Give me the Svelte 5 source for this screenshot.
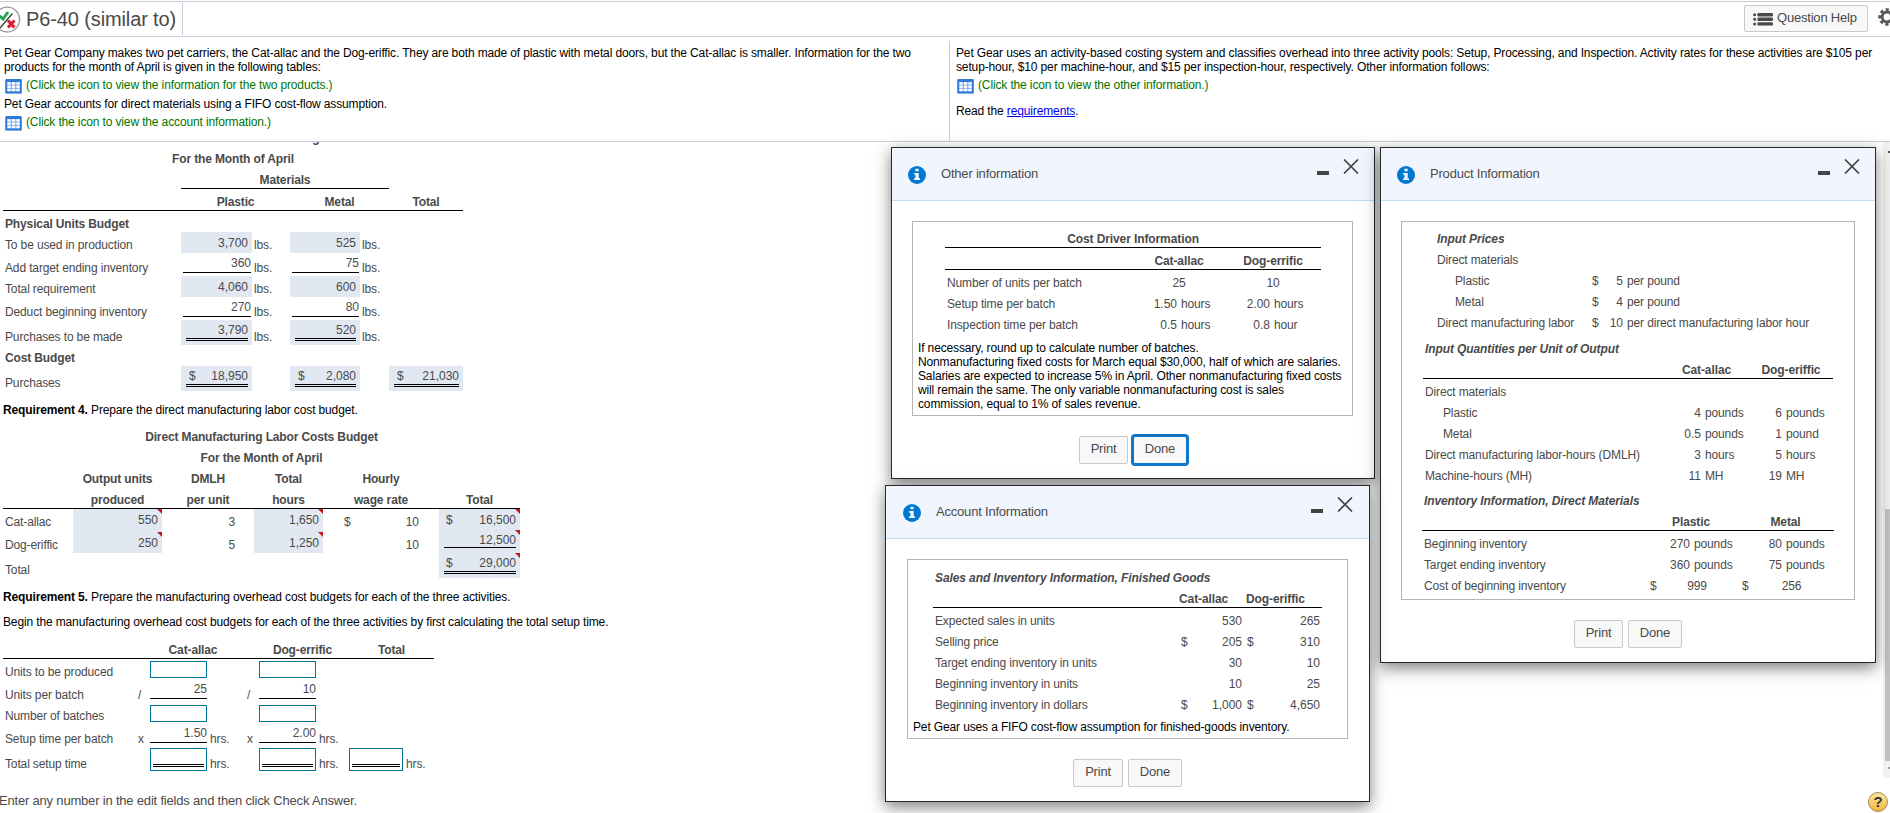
<script>
	const costDriver = [
		['rule', ['Cost Driver Information', 'bold center all']],
		['rule', [''], ['Cat-allac', 'bold center pair'], ['Dog-errific', 'bold center pair']],
		['', ['Number of units per batch'], ['25', 'center pair'], ['10', 'center pair']],
		['', ['Setup time per batch'], ['1.50', 'num'], ['hours', 'unit'], ['2.00', 'num'], ['hours', 'unit']],
		['', ['Inspection time per batch'], ['0.5', 'num'], ['hours', 'unit'], ['0.8', 'num'], ['hour', 'unit']]
	];

	const sales = [
		['', ['Sales and Inventory Information, Finished Goods', 'bold italic all']],
		['rule', [''], ['Cat-allac', 'bold pair cat'], ['Dog-eriffic', 'bold pair dog']],
		['', ['Expected sales in units'], [''], ['530', 'num'], [''], ['265', 'num']],
		['', ['Selling price'], ['$', 'cur'], ['205', 'num'], ['$', 'cur'], ['310', 'num']],
		['', ['Target ending inventory in units'], [''], ['30', 'num'], [''], ['10', 'num']],
		['', ['Beginning inventory in units'], [''], ['10', 'num'], [''], ['25', 'num']],
		['', ['Beginning inventory in dollars'], ['$', 'cur'], ['1,000', 'num'], ['$', 'cur'], ['4,650', 'num']]
	];

	const prices = [
		['', ['Input Prices', 'bold italic all']],
		['', ['Direct materials', 'all']],
		['', ['Plastic', 'indent'], ['$'], ['5', 'num'], ['per pound', 'unit']],
		['', ['Metal', 'indent'], ['$'], ['4', 'num'], ['per pound', 'unit']],
		['', ['Direct manufacturing labor'], ['$'], ['10', 'num'], ['per direct manufacturing labor hour', 'unit']]
	];

	const quantities = [
		['', ['Input Quantities per Unit of Output', 'bold italic all']],
		['rule', [''], ['Cat-allac', 'bold center pair'], ['Dog-eriffic', 'bold center pair']],
		['', ['Direct materials', 'all']],
		['', ['Plastic', 'indent'], ['4', 'num'], ['pounds', 'unit'], ['6', 'num'], ['pounds', 'unit']],
		['', ['Metal', 'indent'], ['0.5', 'num'], ['pounds', 'unit'], ['1', 'num'], ['pound', 'unit']],
		['', ['Direct manufacturing labor-hours (DMLH)'], ['3', 'num'], ['hours', 'unit'], ['5', 'num'], ['hours', 'unit']],
		['', ['Machine-hours (MH)'], ['11', 'num'], ['MH', 'unit'], ['19', 'num'], ['MH', 'unit']]
	];

	const inventory = [
		['', ['Inventory Information, Direct Materials', 'bold italic all']],
		['rule', [''], ['Plastic', 'bold center triple'], ['Metal', 'bold center triple']],
		['', ['Beginning inventory'], [''], ['270', 'num'], ['pounds', 'unit'], [''], ['80', 'num'], ['pounds', 'unit']],
		['', ['Target ending inventory'], [''], ['360', 'num'], ['pounds', 'unit'], [''], ['75', 'num'], ['pounds', 'unit']],
		['', ['Cost of beginning inventory'], ['$', 'cur'], ['999', 'center pair first'], ['$', 'cur'], ['256', 'center pair']]
	];
</script>

{#snippet gridIcon()}
	<svg class="grid-icon" width="17" height="15" viewBox="0 0 17 15">
		<rect width="17" height="15" rx="1.5" fill="#7db0ee" />
		<rect x="0.5" width="16" height="14" rx="1" fill="#2f7ad8" />
		<rect x="2.2" y="3" width="12.6" height="9.4" fill="#7fb0ec" />
		<g fill="#fff">
			{#each [3.2, 6.5, 9.8] as y}
				{#each [2.4, 6.9, 11.4] as x}
					<rect {x} {y} width="3.3" height="2.4" />
				{/each}
			{/each}
		</g>
	</svg>
{/snippet}

{#snippet dataTable(name, rows)}
	<div class="data {name}">
		{#each rows as [kind, ...cells]}
			<div class="line {kind}">
				{#each cells as [text, cls]}
					<span class={cls}>{text}</span>
				{/each}
			</div>
		{/each}
	</div>
{/snippet}

{#snippet popup(name, title, body, focused)}
	<section class="popup {name}">
		<header>
			<svg class="info" width="18" height="18" viewBox="0 0 18 18">
				<circle cx="9" cy="9" r="9" fill="#0078d0" />
				<path d="M7.4 2.8h3.2v2.5H7.4zM6.2 7h4.5v5.3H12V14H6.1v-1.7h1.3V8.7H6.2z" fill="#f1f7fe" />
			</svg>
			<h2>{title}</h2>
			<i class="minimize"></i>
			<svg class="close" width="16" height="15" viewBox="0 0 16 15">
				<path d="M1 .5 15 14.5M15 .5 1 14.5" stroke="#444" stroke-width="1.7" />
			</svg>
		</header>
		<div class="body">
			<div class="frame">{@render body()}</div>
			<div class="buttons">
				<button type="button">Print</button>
				<button type="button" class:focused>Done</button>
			</div>
		</div>
	</section>
{/snippet}

{#snippet otherBody()}
	{@render dataTable('cost-driver', costDriver)}
	<p class="note">
		If necessary, round up to calculate number of batches.<br />
		Nonmanufacturing fixed costs for March equal $30,000, half of which are salaries.<br />
		Salaries are expected to increase 5% in April. Other nonmanufacturing fixed costs<br />
		will remain the same. The only variable nonmanufacturing cost is sales<br />
		commission, equal to 1% of sales revenue.
	</p>
{/snippet}

{#snippet accountBody()}
	{@render dataTable('sales', sales)}
	<p class="note">Pet Gear uses a FIFO cost-flow assumption for finished-goods inventory.</p>
{/snippet}

{#snippet productBody()}
	{@render dataTable('prices', prices)}
	{@render dataTable('quantities', quantities)}
	{@render dataTable('inventory', inventory)}
{/snippet}

<div class="page">
	<div class="titlebar">
		<svg class="score" width="21" height="28" viewBox="0 0 21 28">
			<circle cx="7.2" cy="13.6" r="12.4" fill="#fff" stroke="#999" stroke-width="1.3" />
			<path d="M-1 9.5 3 13 8 6" fill="none" stroke="#22a84f" stroke-width="3" />
			<path d="M12.5 7.5-1 23" stroke="#444" stroke-width="1.4" />
			<path d="m8 14.5 6.5 7M14.5 14.5 8 21.5" stroke="#dc1f2e" stroke-width="3.2" />
		</svg>
		<h1>P6-40 (similar to)</h1>
		<button type="button" class="help">
			<svg width="20" height="13" viewBox="0 0 20 13" fill="#4a4a4a">
				{#each [0, 4.6, 9.2] as y}
					<circle cx="1.6" cy={y + 1.7} r="1.5" />
					<rect x="4.4" {y} width="15.6" height="3.4" rx="1.2" />
				{/each}
			</svg>
			Question Help
		</button>
		<svg class="gear" width="18" height="18" viewBox="0 0 18 18">
			<g stroke="#5a5a5a" fill="none">
				<circle cx="9" cy="9" r="4.9" stroke-width="3" />
				<circle cx="9" cy="9" r="7.4" stroke-width="2.8" stroke-dasharray="3.2 2.612" stroke-dashoffset="1.6" />
			</g>
		</svg>
	</div>

	<div class="problem">
		<div class="left">
			<p>
				Pet Gear Company makes two pet carriers, the Cat-allac and the Dog-eriffic. They are both made of plastic with metal doors, but the Cat-allac is smaller. Information for the two<br />
				products for the month of April is given in the following tables:
			</p>
			<div class="link">{@render gridIcon()}(Click the icon to view the information for the two products.)</div>
			<p class="account">Pet Gear accounts for direct materials using a FIFO cost-flow assumption.</p>
			<div class="link">{@render gridIcon()}(Click the icon to view the account information.)</div>
		</div>
		<div class="right">
			<p>
				Pet Gear uses an activity-based costing system and classifies overhead into three activity pools: Setup, Processing, and Inspection. Activity rates for these activities are $105 per<br />
				setup-hour, $10 per machine-hour, and $15 per inspection-hour, respectively. Other information follows:
			</p>
			<div class="link">{@render gridIcon()}(Click the icon to view the other information.)</div>
			<p class="read">Read the <a href="#requirements">requirements</a>.</p>
		</div>
	</div>

	<main>
		<div class="work">
			<div class="sheet materials">
				<div class="row title">Direct Materials Purchases Budget</div>
				<div class="row title">For the Month of April</div>
				<div class="row head over"><b></b><b class="span4">Materials</b></div>
				<div class="row head"><b></b><b class="span2">Plastic</b><b class="span2">Metal</b><b>Total</b></div>
				<div class="row"><strong>Physical Units Budget</strong></div>
				<div class="row">
					<span>To be used in production</span>
					<div class="val fill">3,700</div><span class="u">lbs.</span>
					<div class="val fill">525</div><span class="u">lbs.</span>
				</div>
				<div class="row mid">
					<span>Add target ending inventory</span>
					<div class="val under">360</div><span class="u">lbs.</span>
					<div class="val under">75</div><span class="u">lbs.</span>
				</div>
				<div class="row">
					<span>Total requirement</span>
					<div class="val fill">4,060</div><span class="u">lbs.</span>
					<div class="val fill">600</div><span class="u">lbs.</span>
				</div>
				<div class="row mid">
					<span>Deduct beginning inventory</span>
					<div class="val under">270</div><span class="u">lbs.</span>
					<div class="val under">80</div><span class="u">lbs.</span>
				</div>
				<div class="row tall">
					<span>Purchases to be made</span>
					<div class="val fill"><em>3,790</em></div><span class="u">lbs.</span>
					<div class="val fill"><em>520</em></div><span class="u">lbs.</span>
				</div>
				<div class="row"><strong>Cost Budget</strong></div>
				<div class="row tall">
					<span>Purchases</span>
					<div class="val fill"><em><i>$</i>18,950</em></div><span></span>
					<div class="val fill"><em><i>$</i>2,080</em></div><span></span>
					<div class="val fill"><em><i>$</i>21,030</em></div>
				</div>
			</div>

			<p class="req4"><b>Requirement 4.</b> Prepare the direct manufacturing labor cost budget.</p>

			<div class="sheet labor">
				<div class="row title">Direct Manufacturing Labor Costs Budget</div>
				<div class="row title">For the Month of April</div>
				<div class="row first"><b></b><b>Output units</b><b>DMLH</b><b>Total</b><b>Hourly</b></div>
				<div class="row head"><b></b><b>produced</b><b>per unit</b><b>hours</b><b>wage rate</b><b>Total</b></div>
				<div class="row">
					<span>Cat-allac</span>
					<div class="val fill flag">550</div>
					<span class="n">3</span>
					<div class="val fill flag">1,650</div>
					<span class="rate"><i>$</i>10</span>
					<div class="val fill flag"><i>$</i>16,500</div>
				</div>
				<div class="row mid">
					<span>Dog-eriffic</span>
					<div class="val fill flag low">250</div>
					<span class="n">5</span>
					<div class="val fill flag low">1,250</div>
					<span class="rate">10</span>
					<div class="val fill flag"><em class="single">12,500</em></div>
				</div>
				<div class="row tall">
					<span>Total</span><span></span><span></span><span></span><span></span>
					<div class="val fill flag"><em><i>$</i>29,000</em></div>
				</div>
			</div>

			<p class="req5"><b>Requirement 5.</b> Prepare the manufacturing overhead cost budgets for each of the three activities.</p>
			<p class="begin">Begin the manufacturing overhead cost budgets for each of the three activities by first calculating the total setup time.</p>

			<div class="sheet setup">
				<div class="row head">
					<b></b><b></b><b class="span2 cat">Cat-allac</b><b></b><b class="span2 dog">Dog-errific</b><b class="span2">Total</b>
				</div>
				<div class="row">
					<span>Units to be produced</span>
					<span></span><div class="field"></div><span></span>
					<span></span><div class="field"></div>
				</div>
				<div class="row mid">
					<span>Units per batch</span>
					<span class="op">/</span><div class="val under">25</div><span></span>
					<span class="op">/</span><div class="val under">10</div>
				</div>
				<div class="row">
					<span>Number of batches</span>
					<span></span><div class="field"></div><span></span>
					<span></span><div class="field"></div>
				</div>
				<div class="row mid">
					<span>Setup time per batch</span>
					<span class="op">x</span><div class="val under">1.50</div><span class="u">hrs.</span>
					<span class="op">x</span><div class="val under">2.00</div><span class="u">hrs.</span>
				</div>
				<div class="row tall">
					<span>Total setup time</span>
					<span></span><div class="field sum"></div><span class="u">hrs.</span>
					<span></span><div class="field sum"></div><span class="u">hrs.</span>
					<div class="field sum"></div><span class="u">hrs.</span>
				</div>
			</div>
		</div>
		<div class="scrollbar">
			<i class="arrow up"></i>
			<div class="thumb"></div>
			<i class="arrow down"></i>
		</div>
	</main>

	<footer>
		<span>Enter any number in the edit fields and then click Check Answer.</span>
		<div class="badge">?</div>
	</footer>

	{@render popup('other', 'Other information', otherBody, true)}
	{@render popup('product', 'Product Information', productBody, false)}
	{@render popup('acct', 'Account Information', accountBody, false)}
</div>

<style>
	:global(body) {
		overflow: hidden;
		background: #fff;
	}
	.page {
		position: relative;
		display: flex;
		flex-direction: column;
		box-sizing: border-box;
		width: 1890px;
		height: 813px;
		padding-top: 1px;
		overflow: hidden;
		font: 12px/14px 'Liberation Sans', Arial, sans-serif;
		letter-spacing: -0.135px;
		color: #4a4a4a;
		white-space: nowrap;
	}
	h1,
	h2,
	p {
		margin: 0;
		font-weight: normal;
	}
	i,
	em {
		font-style: normal;
	}
	button {
		box-sizing: border-box;
		font: 13px/16px 'Liberation Sans', Arial, sans-serif;
		letter-spacing: -0.2px;
		color: #4a4a4a;
		background: #f8f8f8;
		border: 1px solid #c9c9c9;
		border-radius: 2px;
		padding: 0;
	}

	/* title bar */
	.titlebar {
		display: flex;
		align-items: flex-start;
		box-sizing: border-box;
		height: 36px;
		border-top: 1px solid #c8cbdb;
		border-bottom: 1px solid #c8cbdb;
		flex: none;
	}
	.score {
		margin-top: 4px;
	}
	h1 {
		font-size: 20px;
		line-height: 32px;
		height: 32px;
		letter-spacing: -0.12px;
		width: 156px;
		margin: 1px 0 0 5px;
		border-right: 1px solid #c8cbdb;
	}
	.help {
		display: flex;
		align-items: center;
		gap: 4px;
		width: 124px;
		height: 27px;
		margin: 3px 10px 0 auto;
		padding: 0 0 2px 8px;
	}
	.help svg {
		margin-top: 3px;
	}
	.gear {
		margin: 6px -6px 0 0;
	}

	/* problem statement */
	.problem {
		display: flex;
		box-sizing: border-box;
		height: 105px;
		flex: none;
		padding-top: 4px;
		border-bottom: 1px solid #c8cbdb;
		color: #000;
	}
	.left {
		width: 949px;
		flex: none;
		box-sizing: border-box;
		padding: 5px 0 0 4px;
	}
	.right {
		flex: 1;
		padding: 5px 0 0 6px;
		border-left: 1px solid #c8cbdb;
	}
	.link {
		display: flex;
		align-items: center;
		height: 16px;
		margin-top: 3px;
		color: #007400;
	}
	.grid-icon {
		margin: 3px 4px 0 1px;
	}
	.account {
		margin-top: 4px;
	}
	.read {
		margin-top: 11px;
	}
	a {
		color: #00e;
	}

	/* worksheet */
	main {
		display: flex;
		height: 636px;
		flex: none;
		overflow: hidden;
	}
	.work {
		flex: 1;
		margin-top: -17px;
	}
	.sheet {
		margin-left: 3px;
	}
	.row {
		display: grid;
		box-sizing: border-box;
		height: 21px;
		align-items: end;
	}
	.row.mid {
		height: 23px;
	}
	.row.tall {
		height: 25px;
	}
	.row > span,
	.row > b,
	.row > strong {
		padding-bottom: 1px;
	}
	.row > span:first-child,
	.row > strong {
		padding-left: 2px;
	}
	.row > b {
		text-align: center;
	}
	.row.title {
		display: block;
		padding-top: 6px;
		text-align: center;
		font-weight: bold;
	}
	.row.head {
		height: 22px;
		border-bottom: 1px solid #000;
	}
	.row.over {
		border: 0;
	}
	.row.over .span4 {
		padding-bottom: 1px;
		border-bottom: 1px solid #000;
	}
	.span2 {
		grid-column: span 2;
	}
	.span4 {
		grid-column: span 4;
	}
	.row > .u {
		padding-left: 2px;
	}
	.materials {
		width: 460px;
	}
	.materials .row {
		grid-template-columns: 178px 71px 38px 70px 29px 74px;
	}
	.labor {
		width: 517px;
	}
	.labor .row {
		grid-template-columns: 70px 89px 92px 69px 116px 81px;
	}
	.setup {
		width: 431px;
	}
	.setup .row {
		grid-template-columns: 134px 13px 57px 39px 13px 57px 33px 54px 31px;
	}
	.setup .row > .u {
		padding-left: 3px;
	}
	.val {
		position: relative;
		align-self: stretch;
		box-sizing: border-box;
		text-align: right;
		padding-top: 3px;
		letter-spacing: 0;
	}
	.fill {
		background: #e1e8f2;
		padding: 4px 4px 0 5px;
	}
	.fill:has(em) {
		padding-top: 3px;
	}
	.val i,
	.rate i {
		float: left;
		padding-left: 2px;
	}
	.materials .val i {
		padding-left: 3px;
	}
	.val em {
		display: block;
		height: 15px;
		border-bottom: 3px double #000;
	}
	.val em.single {
		height: 14px;
		border-bottom: 1px solid #000;
	}
	.materials .under {
		margin: 0 1px 3px 2px;
		border-bottom: 1px solid #000;
	}
	.setup .under {
		padding-top: 2px;
		margin-bottom: 4px;
		border-bottom: 1px solid #000;
	}
	.flag::after {
		content: '';
		position: absolute;
		top: 0;
		right: 0;
		border-top: 5px solid #c4161c;
		border-left: 5px solid transparent;
	}
	.low {
		padding-top: 6px;
	}
	.low::after {
		top: 2px;
	}
	.row > .n {
		text-align: right;
		padding-right: 19px;
	}
	.row > .rate {
		text-align: right;
		padding: 0 20px 1px 19px;
		letter-spacing: 0;
	}
	.row > .op {
		padding-left: 1px;
	}
	.row > .cat {
		padding-right: 10px;
	}
	.row > .dog {
		padding-right: 3px;
	}
	.field {
		box-sizing: border-box;
		height: 17px;
		margin-bottom: 2px;
		border: 1px solid #00759a;
	}
	.field.sum {
		height: 23px;
		margin-bottom: 1px;
		padding: 15px 2px 0;
	}
	.field.sum::after {
		content: '';
		display: block;
		border-bottom: 3px double #000;
	}
	.req4,
	.req5,
	.begin {
		color: #000;
		padding-left: 3px;
		box-sizing: border-box;
	}
	.req4 {
		height: 33px;
		padding-top: 12px;
	}
	.req5 {
		height: 37px;
		padding-top: 12px;
	}
	.begin {
		height: 22px;
	}

	.scrollbar {
		display: flex;
		flex-direction: column;
		align-items: flex-end;
		width: 7px;
		background: #f1f1f1;
	}
	.thumb {
		width: 5px;
		height: 252px;
		margin-top: auto;
		background: #c1c1c1;
	}
	.arrow {
		width: 2px;
		height: 2px;
	}
	.up {
		margin-top: 9px;
		background: #505050;
	}
	.down {
		margin: 6px 0 9px;
		background: #a3a3a3;
	}

	footer {
		display: flex;
		justify-content: space-between;
		align-items: center;
		height: 35px;
		padding-right: 2px;
		font-size: 13px;
	}
	footer span {
		margin: 10px 0 0 -1px;
		letter-spacing: -0.19px;
	}
	.badge {
		box-sizing: border-box;
		width: 20px;
		height: 20px;
		margin-top: 12px;
		border: 1px solid #a58a4c;
		border-radius: 50%;
		background: linear-gradient(#fde7a0, #f2b63c);
		font: bold 15px/18px 'Liberation Sans', Arial, sans-serif;
		text-align: center;
		color: #333;
	}

	/* popups */
	.popup {
		position: absolute;
		display: flex;
		flex-direction: column;
		box-sizing: border-box;
		border: 1px solid #26282c;
		background: #f1f6fe;
		box-shadow: 0 5px 15px rgba(0, 0, 0, 0.5);
	}
	.other {
		left: 891px;
		top: 147px;
		width: 484px;
		height: 332px;
	}
	.acct {
		left: 885px;
		top: 485px;
		width: 485px;
		height: 317px;
	}
	.product {
		left: 1380px;
		top: 147px;
		width: 496px;
		height: 516px;
	}
	.popup header {
		display: flex;
		align-items: flex-start;
		box-sizing: border-box;
		height: 53px;
		flex: none;
		padding: 11px 15px 0 16px;
		border-bottom: 1px solid #bfdff5;
	}
	.acct header {
		padding: 11px 16px 0 17px;
	}
	.info {
		margin-top: 7px;
	}
	h2 {
		flex: 1;
		margin: 7px 0 0 15px;
		font-size: 13px;
		line-height: 16px;
		letter-spacing: -0.2px;
	}
	.minimize {
		width: 12px;
		height: 4px;
		margin: 12px 14px 0 0;
		background: #444;
	}
	.body {
		flex: 1;
		display: flex;
		flex-direction: column;
		padding: 20px 20px 0;
		background: #fff;
		border-radius: 0 0 6px 6px;
	}
	.frame {
		box-sizing: border-box;
		border: 1px solid #b5b5b5;
		padding-top: 4px;
	}
	.other .frame {
		height: 195px;
		margin-right: 1px;
	}
	.acct .body {
		padding: 20px 21px 0;
	}
	.acct .frame {
		height: 180px;
	}
	.product .frame {
		height: 379px;
	}
	.note {
		color: #000;
		padding: 8px 0 0 5px;
	}
	.buttons {
		display: flex;
		justify-content: center;
		gap: 5px;
		margin-top: 20px;
	}
	.buttons button {
		width: 54px;
		height: 28px;
		padding-bottom: 3px;
	}
	.buttons button:first-child {
		width: 49px;
	}
	.acct .buttons button:first-child {
		width: 50px;
	}
	.buttons .focused {
		border-color: #0f76c8;
		box-shadow: 0 0 0 2px #0f76c8;
	}

	.line {
		display: grid;
		box-sizing: border-box;
		height: 21px;
		padding-top: 6px;
	}
	.line.rule {
		height: 22px;
		border-bottom: 1px solid #000;
	}
	.bold {
		font-weight: bold;
		letter-spacing: -0.1px;
	}
	.italic {
		font-style: italic;
	}
	.center {
		text-align: center;
	}
	.all {
		grid-column: 1 / -1;
	}
	.pair {
		grid-column: span 2;
	}
	.triple {
		grid-column: span 3;
	}
	.num {
		text-align: right;
		letter-spacing: 0;
	}
	.unit {
		padding-left: 4px;
	}
	.indent {
		padding-left: 18px;
	}
	.cost-driver {
		margin-left: 32px;
		width: 376px;
	}
	.cost-driver .line {
		grid-template-columns: 188px 44px 48px 45px 51px;
	}
	.cost-driver .line > :first-child:not(.all),
	.sales .line > :first-child,
	.quantities .line > :first-child,
	.inventory .line > :first-child {
		padding-left: 2px;
	}
	.quantities .line > .indent:first-child {
		padding-left: 20px;
	}
	.sales {
		margin: 1px 0 0 25px;
		width: 389px;
	}
	.sales .line {
		grid-template-columns: 245px 14px 50px 16px 62px 2px;
	}
	.sales .cur {
		padding-left: 3px;
	}
	.sales .cur:nth-child(4) {
		padding-left: 5px;
	}
	.sales .cat {
		padding-left: 1px;
		grid-column: 2 / 4;
	}
	.sales .dog {
		padding-left: 4px;
		grid-column: 4 / 6;
	}
	.acct .note {
		padding-top: 7px;
	}
	.prices {
		margin-left: 35px;
	}
	.prices .line {
		grid-template-columns: 155px 12px 19px auto;
	}
	.quantities {
		margin: 5px 0 0 21px;
		width: 410px;
	}
	.quantities .line {
		grid-template-columns: 241px 37px 48px 33px 51px;
	}
	.inventory {
		margin: 4px 0 0 20px;
		width: 412px;
	}
	.inventory .line {
		grid-template-columns: 223px 19px 26px 47px 12px 33px 52px;
	}
	.inventory .cur {
		padding-left: 5px;
	}
	.inventory .first {
		padding-right: 7px;
	}
</style>
